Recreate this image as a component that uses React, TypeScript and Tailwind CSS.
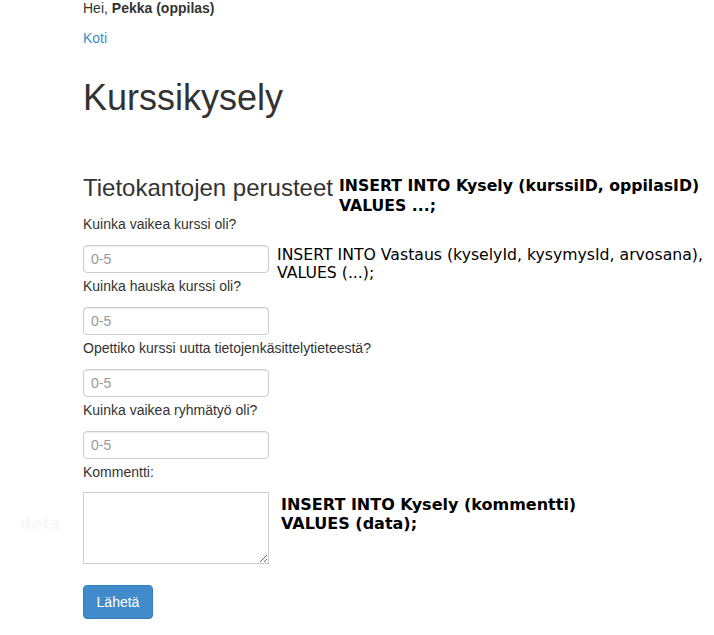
import React from "react";

const sans = { fontFamily: '"Liberation Sans", Arial, sans-serif' };
const deja = { fontFamily: '"DejaVu Sans", sans-serif' };

function Field({ label, note }: { label: string; note?: React.ReactNode }) {
  return (
    <div>
      <div className="h-5 leading-5 text-[14px] text-[#333] mb-[11px]">{label}</div>
      <div className="flex items-start h-[28px] mb-[3px]">
        <input
          placeholder="0-5"
          className="w-[186px] h-[28px] shrink-0 rounded-[4px] border border-[#ccc] px-[7px] text-[14px] text-[#555] placeholder:text-[#999] shadow-[inset_0_1px_1px_rgba(0,0,0,0.075)] outline-none"
          style={sans}
        />
        {note}
      </div>
    </div>
  );
}

export default function App() {
  return (
    <div className="bg-white min-h-[635px] w-[714px] overflow-hidden text-[#333]" style={sans}>
      <div className="pl-[83px]">
        <div className="h-[18px] leading-[18px] text-[14px] mt-[-1px]">
          Hei, <b>Pekka (oppilas)</b>
        </div>
        <div className="mt-[11px] h-5 leading-5 text-[14px] text-[#428bca]">Koti</div>
        <h1 className="mt-[30px] text-[36px] leading-[40px] text-[#333]">Kurssikysely</h1>
        <div className="mt-[57px] flex items-start h-[26px]">
          <h3 className="text-[24px] leading-[26px] text-[#333] whitespace-nowrap">Tietokantojen perusteet</h3>
          <div
            className="ml-[6px] mt-[1px] text-[15.7px] leading-[20px] text-black whitespace-nowrap font-bold"
            style={deja}
          >
            INSERT INTO Kysely (kurssiID, oppilasID)
            <br />
            VALUES ...;
          </div>
        </div>
        <div className="mt-[13px]">
          <Field
            label="Kuinka vaikea kurssi oli?"
            note={
              <div
                className="ml-[8px] mt-[1px] text-[15.7px] leading-[18px] text-black whitespace-nowrap"
                style={deja}
              >
                INSERT INTO Vastaus (kyselyId, kysymysId, arvosana),
                <br />
                VALUES (...);
              </div>
            }
          />
          <Field label="Kuinka hauska kurssi oli?" />
          <Field label="Opettiko kurssi uutta tietojenkäsittelytieteestä?" />
          <Field label="Kuinka vaikea ryhmätyö oli?" />
        </div>
        <div className="h-5 leading-5 text-[14px] text-[#333] mb-[10px]">Kommentti:</div>
        <div className="relative flex items-start">
          <span className="absolute left-[-63px] top-[20px] text-[16px] font-bold text-[#f8f8f8]" style={deja}>data</span>
          <textarea className="w-[186px] h-[72px] shrink-0 border border-[#ccc] resize-y outline-none" />
          <div className="ml-[12px] mt-[3px] text-[16px] leading-[19px] text-black whitespace-nowrap font-bold" style={deja}>
            INSERT INTO Kysely (kommentti)
            <br />
            VALUES (data);
          </div>
        </div>
        <button
          className="mt-[21px] w-[70px] h-[34px] rounded-[4px] bg-[#428bca] border border-[#357ebd] text-white text-[14px]"
          style={sans}
        >
          Lähetä
        </button>
      </div>
    </div>
  );
}
